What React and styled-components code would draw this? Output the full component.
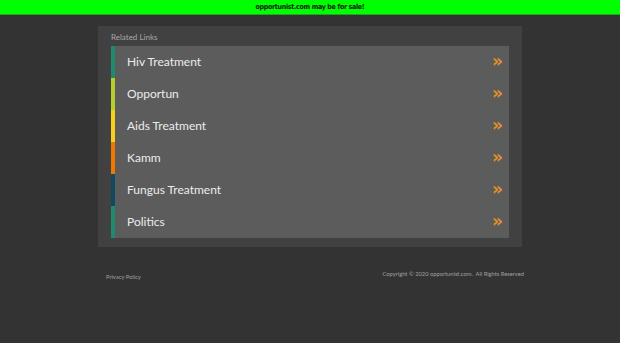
import styled, { createGlobalStyle } from 'styled-components'

const GlobalStyle = createGlobalStyle`
  html, body {
    margin: 0;
    padding: 0;
    background: #333333;
  }
  body {
    font-family: Lato, 'Liberation Sans', sans-serif;
  }
`

const LINKS = [
  { label: 'Hiv Treatment', color: '#1d8c6e' },
  { label: 'Opportun', color: '#b6cd2b' },
  { label: 'Aids Treatment', color: '#f7d117' },
  { label: 'Kamm', color: '#f07800' },
  { label: 'Fungus Treatment', color: '#0f4a5f' },
  { label: 'Politics', color: '#1d8c6e' },
]

export default function App() {
  return (
    <>
      <GlobalStyle />
      <Page>
        <SaleBar>opportunist.com may be for sale!</SaleBar>
        <Panel>
          <PanelTitle>Related Links</PanelTitle>
          <LinkList>
            {LINKS.map((link) => (
              <LinkRow key={link.label} accent={link.color}>
                <LinkLabel>{link.label}</LinkLabel>
                <Arrow>»</Arrow>
              </LinkRow>
            ))}
          </LinkList>
        </Panel>
        <Footer>
          <FooterText offset={5}>Privacy Policy</FooterText>
          <FooterText offset={2}>
            Copyright © 2020 opportunist.com.&nbsp; All Rights Reserved
          </FooterText>
        </Footer>
      </Page>
    </>
  )
}

const Page = styled.div`
  min-height: 343px;
  background: #333333;
`

const SaleBar = styled.div`
  height: 15px;
  background: #00ff00;
  border-bottom: 1px solid #1fa61f;
  box-sizing: border-box;
  text-align: center;
  font-family: 'DejaVu Sans Condensed', 'DejaVu Sans', sans-serif;
  font-size: 7px;
  font-weight: bold;
  letter-spacing: -0.3px;
  line-height: 14px;
  color: #111;
`

const Panel = styled.div`
  width: 424px;
  margin: 11px auto 0;
  background: #414141;
  padding: 5px 13px 9px;
  box-sizing: border-box;
`

const PanelTitle = styled.div`
  height: 15px;
  font-size: 8px;
  line-height: 13px;
  color: #a8a8a8;
`

const LinkList = styled.div`
  display: flex;
  flex-direction: column;
  background: #5c5c5c;
`

const LinkRow = styled.div`
  display: flex;
  align-items: center;
  justify-content: space-between;
  height: 32px;
  border-left: 4px solid ${(props) => props.accent};
  padding: 0 6px 1px 12px;
  box-sizing: border-box;
`

const LinkLabel = styled.span`
  font-size: 12px;
  color: #ececec;
`

const Arrow = styled.span`
  font-family: 'DejaVu Sans', sans-serif;
  font-size: 17px;
  font-weight: bold;
  color: #e8912a;
  line-height: 1;
`

const Footer = styled.div`
  width: 428px;
  margin: 21px auto 0;
  display: flex;
  justify-content: space-between;
  align-items: flex-start;
  padding-left: 10px;
  box-sizing: border-box;
`

const FooterText = styled.span`
  font-size: 5.75px;
  color: #a0a0a0;
  margin-top: ${(props) => props.offset}px;
`
